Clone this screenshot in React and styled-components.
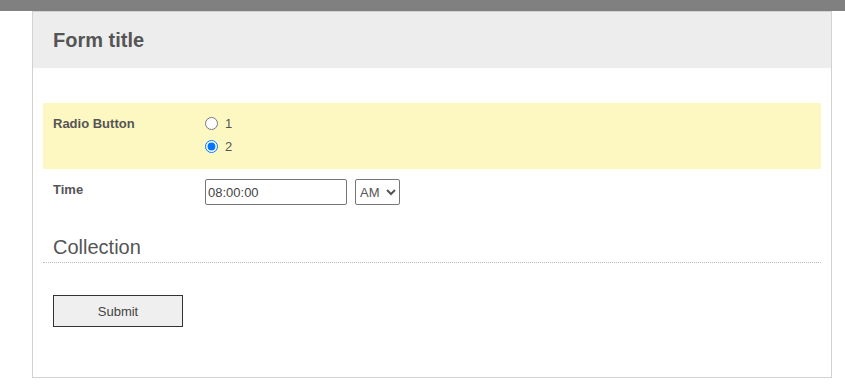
import React from 'react';
import styled, { createGlobalStyle } from 'styled-components';

const GlobalStyle = createGlobalStyle`
    body {
        margin: 0;
        background: #ffffff;
        font-family: 'Liberation Sans', Arial, sans-serif;
        color: #555555;
    }
`

const TopBar = styled.div`
    height: 11px;
    background: #808080;
`

const Card = styled.div`
    box-sizing: border-box;
    width: 800px;
    height: 367px;
    margin-left: 32px;
    border: 1px solid #d2d2d2;
`

const Header = styled.div`
    height: 56px;
    background: #ededed;
    display: flex;
    align-items: center;
    padding-left: 20px;
`

const Title = styled.h1`
    margin: 0;
    font-size: 20px;
    font-weight: bold;
    color: #555555;
`

const Body = styled.div`
    padding: 35px 10px 0 10px;
`

const Row = styled.div`
    display: grid;
    grid-template-columns: 152px 1fr;
    padding: ${p => p.$pad};
    background: ${p => p.$highlight ? '#fdf7c1' : 'transparent'};
`

const Label = styled.div`
    font-size: 13px;
    font-weight: bold;
    color: #555555;
    margin-top: ${p => p.$top}px;
`

const Options = styled.div`
    display: flex;
    flex-direction: column;
    gap: 10px;
`

const Option = styled.label`
    display: flex;
    align-items: center;
    font-size: 13px;
    color: #555555;
    height: 13px;
`

const Radio = styled.input`
    width: 13px;
    height: 13px;
    margin: 0 7px 0 0;
`

const Controls = styled.div`
    display: flex;
    gap: 8px;
`

const TimeInput = styled.input`
    box-sizing: border-box;
    width: 142px;
    height: 26px;
    border: 1px solid #767676;
    border-radius: 2px;
    padding: 0 2px;
    font-family: 'Liberation Sans', Arial, sans-serif;
    font-size: 13px;
    color: #444444;
`

const Select = styled.select`
    box-sizing: border-box;
    width: 45px;
    height: 26px;
    border: 1px solid #767676;
    border-radius: 2px;
    font-family: 'Liberation Sans', Arial, sans-serif;
    font-size: 13px;
    color: #555555;
    background: #ffffff;
`

const Section = styled.h2`
    margin: 30px 0 0 0;
    padding: 0 10px 3px 10px;
    font-size: 20px;
    line-height: 24px;
    font-weight: normal;
    color: #555555;
    border-bottom: 1px dotted #bdbdbd;
`

const Submit = styled.button`
    box-sizing: border-box;
    margin: 32px 0 0 10px;
    width: 130px;
    height: 32px;
    background: #efefef;
    border: 1px solid #333333;
    font-family: 'Liberation Sans', Arial, sans-serif;
    font-size: 13px;
    color: #444444;
`

export default function App() {
    return (
        <>
            <GlobalStyle />
            <TopBar />
            <Card>
                <Header>
                    <Title>Form title</Title>
                </Header>
                <Body>
                    <Row $highlight $pad="14px 10px 16px 10px">
                        <Label $top={-1}>Radio Button</Label>
                        <Options>
                            <Option><Radio type="radio" name="r" />1</Option>
                            <Option><Radio type="radio" name="r" defaultChecked />2</Option>
                        </Options>
                    </Row>
                    <Row $pad="10px 10px 0 10px">
                        <Label $top={3}>Time</Label>
                        <Controls>
                            <TimeInput type="text" defaultValue="08:00:00" />
                            <Select defaultValue="AM">
                                <option>AM</option>
                                <option>PM</option>
                            </Select>
                        </Controls>
                    </Row>
                    <Section>Collection</Section>
                    <Submit>Submit</Submit>
                </Body>
            </Card>
        </>
    );
}
